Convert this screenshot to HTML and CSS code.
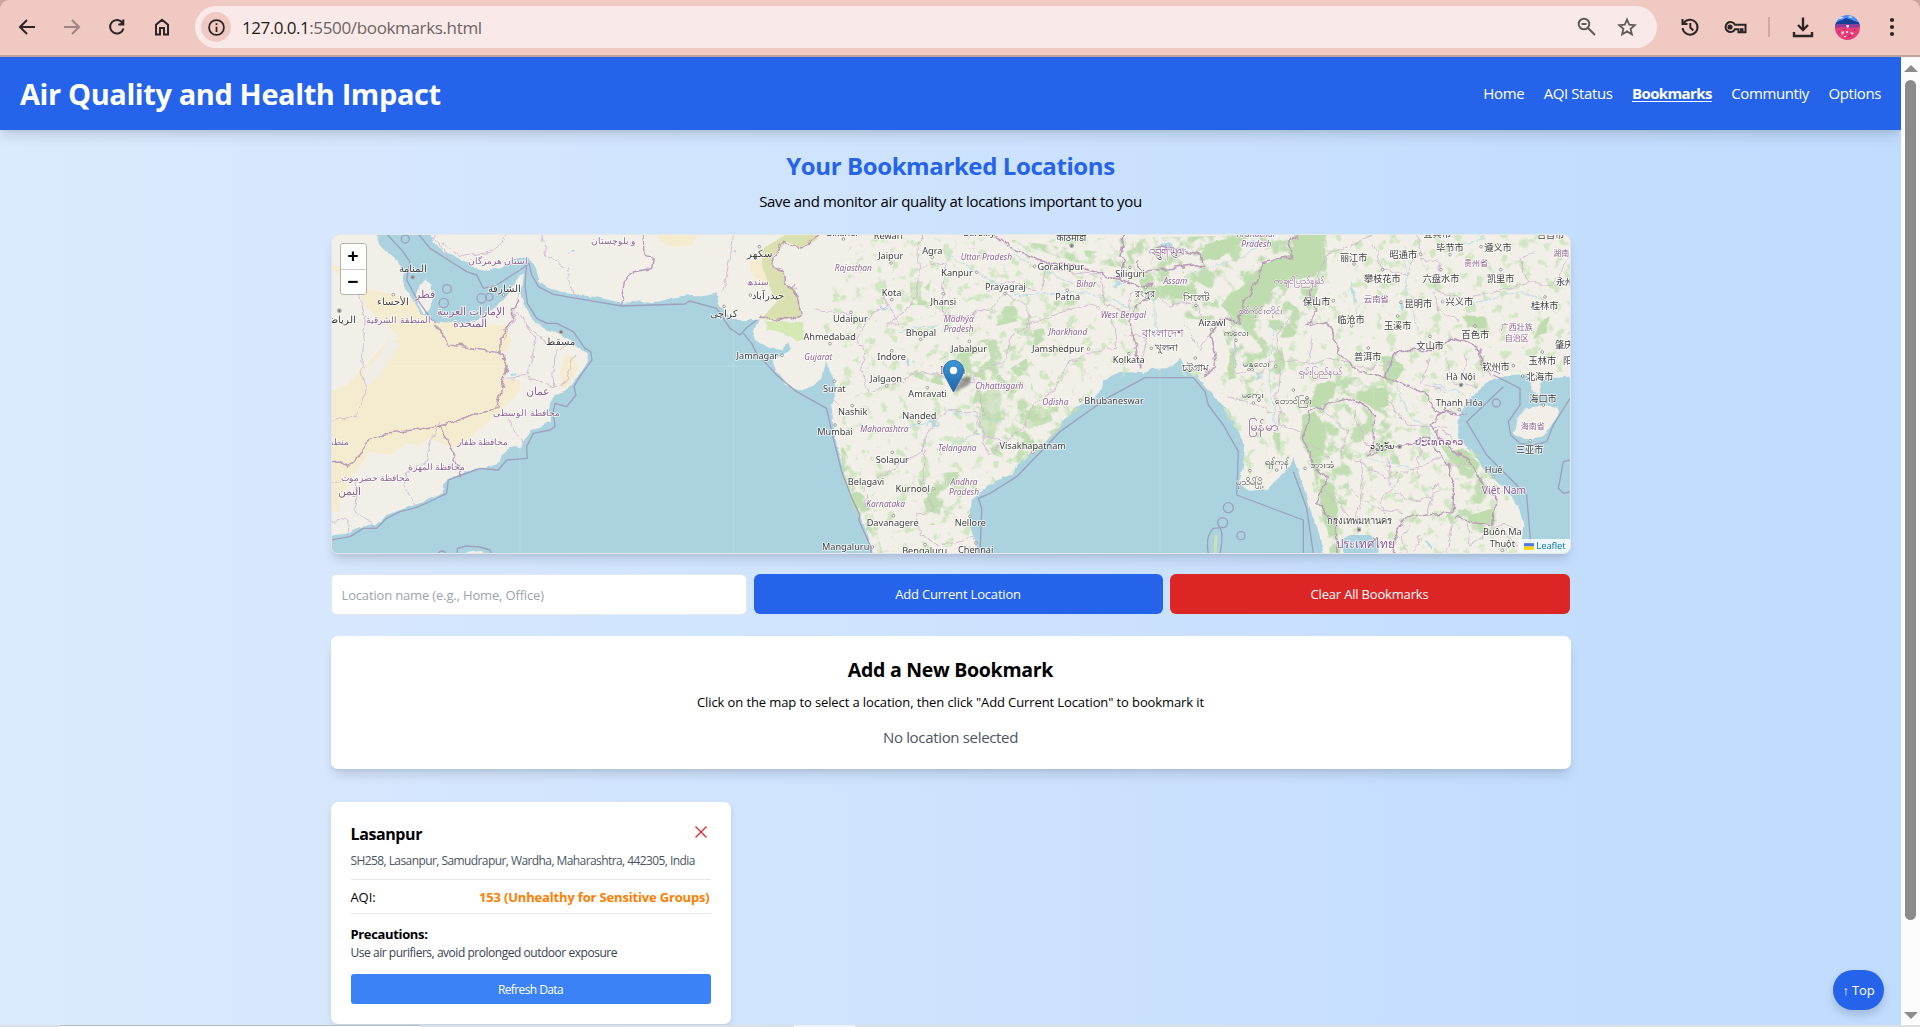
FILE: index.html
```html
<!DOCTYPE html>
<html lang="en">
<head>
<meta charset="utf-8">
<title>Air Quality and Health Impact</title>
<link rel="stylesheet" href="styles.css">
</head>
<body>
<div class="toolbar">
  <div class="nav-icons">
    <svg class="ico" viewBox="0 0 24 24"><path d="M20 12H5M12 5L5 12l7 7"/></svg>
    <svg class="ico faded" viewBox="0 0 24 24"><path d="M4 12h15M12 5l7 7-7 7"/></svg>
    <svg class="ico" viewBox="0 0 24 24"><path d="M17.600 8A6.800 6.800 0 1 0 18.500 13.500"/><path d="M19 4.500v5.500h-5.500z" fill="#2b2625" stroke="none"/><path d="M18.300 4.500V9.500h-5"/></svg>
    <svg class="ico" viewBox="0 0 24 24"><path d="M6 19.500V9.800L12 4.700l6 5.100v9.700h-4v-6.500h-4v6.500z"/></svg>
  </div>
  <div class="address">
    <span class="info"><svg viewBox="0 0 24 24"><circle cx="12" cy="12" r="8.500"/><path d="M12 11v6M12 7v2"/></svg></span>
    <span class="url"><span class="host">127.0.0.1</span>:5500/bookmarks.html</span>
    <svg class="ico grey zoom" viewBox="0 0 24 24"><circle cx="9" cy="9" r="5.300"/><path d="M13 13l7 7M6.500 9h5"/></svg>
    <svg class="ico grey star" viewBox="0 0 24 24"><path d="M12 4.500l2.200 5.200 5.600.5-4.200 3.700 1.300 5.500-4.900-3-4.900 3 1.300-5.500-4.200-3.700 5.600-.5z" stroke-width="1.800"/></svg>
  </div>
  <svg class="ico history" viewBox="0 0 24 24"><path d="M5.500 8.500A7.500 7.500 0 1 1 4.600 13M4.500 4V9h5M12.300 8v4.500l3 3"/></svg>
  <svg class="ico key" viewBox="0 0 26 24"><path d="M13 9.800A5 5 0 1 0 13 14.200h3.500v3h2.500v-3h1.500v3h3v-7.400z"/><circle cx="8" cy="12" r="2.600" fill="#2b2625" stroke="none"/></svg>
  <span class="sep"></span>
  <svg class="ico download" viewBox="0 0 24 24"><path d="M12 2.500v12M7 10L12 15l5-5M3 17v4h18v-4" stroke-width="2.400"/></svg>
  <svg class="avatar" viewBox="0 0 25 25">
    <clipPath id="av"><circle cx="12.500" cy="12.500" r="12.500"/></clipPath>
    <g clip-path="url(#av)"><path fill="#4a8df5" d="M0 0h25v8H0z"/><path fill="#cfe0ff" d="M3 2l5 0 1 1-5 1zM15 1l3 1-2 1-3-1z"/><path fill="#173f96" d="M0 8l4-2 3-1 4-2 6 2 8 3v3H0z"/><path fill="#8a3f9b" d="M0 9h25v4H0z"/><path fill="#ea3d78" d="M0 13l9-1 6 1 10-1v13H0z"/><path fill="#fbd3e4" d="M11 10h3v2l-2 1zM6 17l3-1v2l-2 2zM15 17l4 1-2 2zM11 16h2v2h-2zM9 21h2v1H9z"/><path fill="#7c2d7c" d="M3 16l2 1-1 1zM14 20l2 1-3 1zM19 14l2 1-2 1zM8 14h2v1z"/></g>
  </svg>
  <svg class="dots" viewBox="0 0 6 20"><circle cx="3" cy="3" r="2.100"/><circle cx="3" cy="10" r="2.100"/><circle cx="3" cy="17" r="2.100"/></svg>
</div>

<div class="viewport">
  <div class="page">
    <header class="header">
      <h1>Air Quality and Health Impact</h1>
      <nav>
        <a>Home</a><a>AQI Status</a><a class="active">Bookmarks</a><a>Communtiy</a><a>Options</a>
      </nav>
    </header>
    <main>
      <h2>Your Bookmarked Locations</h2>
      <p class="lead">Save and monitor air quality at locations important to you</p>

      <div class="map">
        <svg class="tiles" viewBox="33 27 3720 960" preserveAspectRatio="none">
          <defs>
            <filter id="veg" x="0" y="0" width="1" height="1" color-interpolation-filters="sRGB">
              <feTurbulence type="fractalNoise" baseFrequency="0.022" numOctaves="5" seed="7"/>
              <feColorMatrix values="0 0 0 0 .755  0 0 0 0 .865  0 0 0 0 .70  7 0 0 0 -3.4"/>
              <feComposite in2="SourceGraphic" operator="in"/>
            </filter>
            <filter id="specks" x="0" y="0" width="1" height="1" color-interpolation-filters="sRGB">
              <feTurbulence type="fractalNoise" baseFrequency="0.030" numOctaves="4" seed="21"/>
              <feColorMatrix values="0 0 0 0 .82  0 0 0 0 .90  0 0 0 0 .76  8 0 0 0 -4.6"/>
              <feComposite in2="SourceGraphic" operator="in"/>
            </filter>
            <filter id="rough" x="-5%" y="-5%" width="110%" height="110%">
              <feTurbulence type="fractalNoise" baseFrequency="0.030" numOctaves="3" seed="3"/>
              <feDisplacementMap in="SourceGraphic" scale="26" xChannelSelector="R" yChannelSelector="G"/>
            </filter>
            <filter id="coast" filterUnits="userSpaceOnUse" x="0" y="0" width="3790" height="1010">
              <feTurbulence type="fractalNoise" baseFrequency="0.035" numOctaves="2" seed="9"/>
              <feDisplacementMap in="SourceGraphic" scale="14" xChannelSelector="R" yChannelSelector="G"/>
            </filter>
          </defs>
          <rect x="0" y="0" width="3800" height="1010" fill="#aad3df"/>

          <g class="land" filter="url(#coast)">
            <path d="M0 0H165L175 50 190 70 215 90 235 110 250 140 245 160 262 200 285 235 300 265 325 270 345 295 400 290 430 298 470 288 500 265 530 245 560 210 580 180 600 150 612 150 608 180 600 200 610 235 625 265 650 295 690 320 720 325 750 345 775 370 803 385 803 410 785 440 760 470 735 500 705 510 690 530 688 560 690 590 660 608 635 615 615 645 600 665 565 670 545 690 540 710 510 722 470 730 430 745 390 758 370 780 368 805 340 818 290 838 240 855 200 870 170 900 120 905 80 925 0 938z"/>
            <path d="M300 178L318 163 335 180 337 215 330 245 315 267 300 252 290 215z"/>
            <path d="M318 0L340 50 365 80 400 90 440 112 490 137 540 130 580 105 625 95 645 130 655 170 680 187 740 205 820 215 870 225 905 235 940 228 1000 235 1060 217 1110 210 1160 212 1190 205 1195 235 1215 265 1240 285 1310 285 1325 282 1295 315 1305 345 1350 370 1390 375 1400 355 1412 370 1390 392 1355 402 1370 440 1400 480 1440 498 1480 482 1508 455 1518 405 1530 440 1540 460 1550 500 1535 540 1540 600 1550 660 1565 700 1575 760 1590 800 1615 860 1635 910 1655 960 1660 1000H1965L1970 960 1955 920 1952 870 1955 825 1990 795 2020 770 2080 748 2090 715 2140 680 2190 640 2230 590 2260 550 2320 522 2345 495 2350 465 2400 440 2470 445 2490 432 2540 430 2580 402 2595 435 2630 445 2650 480 2690 525 2730 560 2760 620 2775 670 2770 720 2758 775 2790 797 2840 792 2875 757 2910 728 2920 695 2930 730 2955 790 2970 850 2995 920 3015 1000H3600L3610 900 3595 840 3550 790 3500 740 3460 690 3415 640 3415 600 3420 560 3450 520 3480 490 3520 462 3570 450 3620 447 3640 500 3655 512 3668 462 3800 450V0z"/>
            <path d="M3590 580L3620 550 3670 540 3712 545 3715 570 3690 610 3660 640 3620 645 3582 625z"/>
            <path d="M420 1000L440 983 485 978 500 1000z"/>
          </g>

          <g class="sand">
            <path d="M33 120L60 125 130 190 250 215 285 235 300 268 340 290 390 360 540 378 566 420 530 545 545 560 480 610 450 640 400 670 330 640 300 660 260 655 210 690 150 680 100 750 60 830 60 860H33V500L80 480 130 430 200 350 240 340 190 290 130 240 120 200 33 130z"/>
            <path d="M390 292L440 298 560 300 575 345 560 380 540 380 392 360 345 295z"/>
            <path d="M735 395L760 392 775 430 745 480 725 495 720 440zM555 465L600 465 600 500 540 560 530 540z"/>
            <path d="M1010 27H1130L1120 60 1060 65 1020 50zM1290 110L1320 100 1360 160 1390 170 1330 180 1290 140z"/>
          </g>
          <path class="pale" d="M130 440L180 390 205 340 240 360 180 450 135 490z"/>
          <path fill="#dbe0b0" d="M1400 27H1495L1490 45 1440 70 1400 50 1355 100 1360 125 1390 140 1395 180 1425 190 1445 270 1430 280 1350 285 1325 280 1370 230 1355 200 1325 120 1330 70z"/>
          <path fill="#d5e9b5" filter="url(#coast)" d="M1335 288L1400 290 1450 290 1450 340 1430 350 1390 320 1340 318z"/>

          <path filter="url(#specks)" d="M1600 40H2440L2480 430 2340 480 2300 520 2080 740 1950 830 1950 980H1670L1560 660 1560 420 1500 280z"/>
          <g filter="url(#specks)"><path d="M2560 430H2900L2910 700 2800 780 2700 520zM3000 30H3780V440H3500L3430 560 3430 640 3590 850V990H3020L2960 700 2900 400z"/></g>
          <g class="veg" filter="url(#veg)">
            <path d="M2400 40L2800 30 3020 30V130L2950 300 2880 340 2900 440 2790 520 2750 450 2700 290 2600 280 2480 220zM2940 560L3000 440 3200 470 3220 620 3240 720 3100 680 3060 990H3030L2980 730zM3360 660L3480 690 3530 800 3520 930 3360 900 3440 780zM1970 490L2120 400 2150 550 2290 540 2110 720 2020 690 1950 560zM1560 650L1640 800 1690 990H1650L1570 760zM1760 450L1960 350 2170 310 2180 340 2000 470 1860 480zM1770 170L1840 120 1820 240 1770 240zM2040 40L2400 90 2420 130 2260 110zM1790 750L1920 740 1900 900 1830 900zM2000 250L2280 220 2260 250 2000 310z"/>
          </g>
          <g class="forest" filter="url(#coast)">
            <path d="M2650 60L2750 32 2800 30 2750 60 2700 100 2640 110zM2840 110L2920 90 2915 50 2930 27 3010 27 3020 120 2980 155 2900 165 2850 200 2820 270 2790 280 2760 290 2700 240 2740 200 2780 180 2810 140zM2515 180L2570 178 2630 190 2630 215 2570 220 2515 205zM2900 290L2930 320 2920 335 2880 340zM3185 395L3215 390 3250 430 3240 450 3210 485 3190 460zM3430 270L3495 275 3500 310 3440 305zM2990 480L3030 465 3045 480 3040 520 3000 550 2970 545zM3110 500L3200 485 3210 540 3170 555 3110 520zM2950 570L2980 560 3020 610 3010 690 2970 700 2940 640zM3390 680L3430 670 3480 720 3470 740 3420 710zM3000 760L3040 780 3055 850 3050 930 3030 940 3000 840zM3450 870L3520 850 3510 900 3440 890zM2860 620L2880 620 2880 680 2865 670zM2725 390L2745 390 2745 460 2725 465zM3660 290L3690 270 3680 320 3640 340z"/>
            <path opacity=".6" d="M1990 500L2040 490 2045 540 2020 640 1975 600zM2080 310L2130 305 2150 335 2090 330zM1770 175L1810 165 1800 230 1770 220zM2140 540L2190 560 2200 590 2120 610 2100 590z"/>
          </g>
          <path fill="#aad3df" d="M3062 945L3090 930 3150 930 3180 950 3170 1000H3075z"/>

          <g class="river" filter="url(#rough)">
            <path d="M2600 160L2660 130 2760 100 2830 50M2500 220L2505 330M2745 340L2740 440M2860 290L2850 480 2870 620M1870 80L1980 150 2100 210 2300 200 2440 250M2080 90L2260 180M1740 320L1860 300M1880 560L2050 590M1890 660L1980 620M3250 60L3260 200 3300 330M3340 480L3420 500M3200 400L3260 560 3350 640M3440 240L3600 200M3140 700L3280 730M3410 60L3500 40M1730 610L1860 590M3600 200L3680 230M3090 170L3110 270"/>
            <path stroke-width="8" d="M1760 400L1770 420M1680 240L1700 250M3095 190L3110 230M3240 230L3245 250M3310 950L3340 970M2400 170L2380 190M1830 590L1850 605M2810 440L2815 460M2520 60L2560 66M2780 60L2810 50M570 447L590 449M742 80L760 82M1245 80L1252 82"/>
          </g>

          <g class="admin" filter="url(#rough)">
            <path d="M385 100L360 60 340 27M365 55L420 95 520 80 560 27M665 27L680 90 740 130 765 215M1240 30L1225 140 1205 200M110 180L135 290 125 430 140 500 105 580 33 582M360 590L330 650 320 710 260 745 255 790 290 845M545 560L615 665M560 460L620 455 650 345 590 260M620 460L700 485 705 380 760 350M700 480L740 470 765 390M600 200L580 280 550 350M620 300L660 330 680 355M33 775L75 765 110 770 105 860 165 905M33 890L80 885 85 935"/>
            <path d="M1480 255L1560 260 1640 290 1660 260 1700 240 1690 210 1720 270 1740 300 1700 300 1780 240 1800 130 1880 110 1870 200 1860 260 1920 280 2010 250 2060 200 2120 240 2130 300 2110 330M1640 290L1610 340 1640 380 1620 430 1650 500 1720 480 1800 440 1960 470 1980 440 2060 400 2070 340 2120 300 2260 250 2320 240 2380 280 2390 370 2300 380 2240 420 2200 500 2140 540 2110 610 2000 690 1990 620 1970 560 1880 560 1820 620 1810 680 1770 700 1640 780 1630 800M1970 480L1990 570 1960 620 2050 650M1820 620L1810 780 1840 850 1790 870 1800 930 1850 960 1960 940M1640 810L1630 860M2000 200L2060 170 2160 200 2180 130 2340 150M2340 150L2360 240 2420 260 2440 200M1800 130L1790 60 1810 27M1540 530L1560 540M2420 330L2480 340 2460 430M2500 180L2540 240 2630 230 2650 300M2590 300L2640 370 2690 300 2720 270 2750 330 2740 430"/>
            <path d="M2970 300L2990 250 2960 200 2990 160 3020 90 3100 60 3160 30M3160 60L3190 130 3260 150 3300 80 3290 30M3300 100L3360 110 3350 200 3430 220 3500 210 3620 170 3600 100 3640 80M3340 200L3360 260 3420 290M3620 170L3700 180 3750 90M3240 380L3200 420 3140 430 3030 400 2960 420 2880 400 2870 330 2910 270M2880 430L2870 520 2880 600 2940 620M2980 330L2970 400M2720 510L2800 540 2890 570M2740 450L2820 440 2880 400M3100 700L3200 760 3360 700M3120 700L3130 800 3100 900M3200 700L3210 800 3300 830 3360 800M3240 760L3180 830 3200 880M3300 660L3290 760M3080 780L3160 850 3250 860M3350 770L3320 870M3290 880L3240 940 3260 985M3400 890L3380 980M3440 880L3450 960 3540 900 3600 910M3370 720L3460 720M3330 400L3300 480 3380 500M3380 400L3400 470 3480 490M3440 380L3430 450M3480 400L3510 460M3200 520L3260 600 3380 610M2990 540L3080 620 3060 700M3100 530L3120 620 3160 680M3010 800L3060 830 3090 900M2960 650L3030 700M3400 640L3360 620M3120 870L3110 930M3540 910L3590 960M3300 930L3280 980"/>
          </g>
          <g class="nation" filter="url(#rough)">
            <path d="M335 285L390 360 540 380 540 350 565 300 580 260 600 220M540 380L566 420 530 545 360 603 290 617 195 627 140 655 100 715 75 725 60 708 33 710M360 603L425 750"/>
            <path d="M972 27L975 95 1000 100 995 130 945 140 918 160 905 240M1500 27L1440 70 1390 50 1355 100 1360 125 1390 145 1395 180 1425 190 1445 270 1420 285 1320 280M2020 27L2090 80 2180 110 2290 130 2390 160 2420 110 2400 90 2410 27M2450 100L2460 140 2650 120 2640 90 2510 60M2390 160L2480 190 2500 170M2460 430L2440 350 2430 290 2450 240 2500 200M2760 300L2700 280 2670 330 2690 420 2650 450M2760 300L2770 230 2800 190 2830 110 2920 95 2910 50 2940 27M3210 400L3240 380 3340 370 3400 340 3480 370 3490 430 3540 450M3210 400L3200 460 3260 480 3300 500 3360 560 3440 570M3000 160L2970 200 2990 260 2960 300 3020 290 3050 350 3070 400 3120 440 3170 450 3200 460M2950 640L2970 560 3040 530 3100 520 3160 560 3160 650 3140 690 3250 660 3330 640 3370 700 3400 770 3400 860 3250 880 3220 960 3230 1000M2950 640L2980 720 3020 760 2990 830 3040 890 3050 1000M3330 600L3400 680 3440 700 3490 770 3530 830 3520 900 3400 880M3330 600L3380 550"/>
          </g>
          <g class="maritime">
            <path d="M200 27L245 75 270 110 260 165 290 220 335 285M295 27L330 70 385 105 440 140 470 150 490 190 530 180 600 135 627 115 635 150 655 185 700 208 770 220 905 243 1095 237 1108 228 1190 250 1230 310 1260 330 1278 310 1310 285M1270 325L1295 355 1310 385 1370 450 1430 500 1520 550 1535 620 1565 740 1600 830 1620 870 1616 885 1650 960 1655 990"/>
            <path d="M620 115L615 180 622 235 650 280 680 295 710 295 760 320 795 370 812 380 816 405 790 440 770 470 762 485 768 510 740 545 705 535 700 560 705 605 690 615 640 625 620 665 622 700 560 705 535 735 480 730 425 750 385 765 380 805 340 825 290 847 240 860 200 880 170 910 130 910 90 935 33 945"/>
            <path d="M1980 990L1985 850 1975 820 2010 805 2090 755 2220 620 2360 520 2475 458 2620 458 2655 500 2665 540 2710 600 2755 680 2750 810 2950 885V990M2920 740L2960 850 2980 985M3520 450L3600 490 3600 540 3565 590 3572 630 3600 655M3550 485L3440 590 3500 690 3620 810 3635 990M3750 520L3700 600 3680 650 3640 660 3600 655M3750 705L3730 710 3715 790 3730 805 3752 800"/>
            <path d="M2665 985Q2655 935 2680 910L2700 908Q2712 930 2700 985M412 985V970L440 963 480 966 510 975 515 985"/>
            <g><circle cx="381" cy="192" r="13"/><circle cx="371" cy="234" r="14"/><circle cx="485" cy="220" r="14"/><circle cx="508" cy="216" r="11"/><circle cx="256" cy="42" r="12"/><circle cx="2725" cy="848" r="15"/><circle cx="2708" cy="893" r="15"/><circle cx="2763" cy="932" r="12"/><circle cx="3529" cy="534" r="12"/><circle cx="366" cy="988" r="10"/></g>
          </g>
          <path fill="#cfe0b4" d="M2680 985L2684 930 2693 930 2690 985z"/>
          <path class="seams" d="M600 27V987M1240 27V987M1880 27V987M2520 27V987M3160 27V987M33 424H3753"/>

          <g class="towns">
            <g><circle cx="220" cy="209" r="4"/><circle cx="551" cy="210" r="4"/><circle cx="1212" cy="244" r="4"/>
            <circle cx="1318" cy="65" r="4"/><circle cx="1291" cy="210" r="4"/><circle cx="1570" cy="42" r="4"/><circle cx="1713" cy="114" r="4"/><circle cx="1837" cy="97" r="4"/><circle cx="1970" cy="142" r="4"/><circle cx="2143" cy="124" r="4"/><circle cx="2055" cy="206" r="4"/><circle cx="1715" cy="224" r="4"/><circle cx="1870" cy="206" r="4"/><circle cx="2242" cy="196" r="4"/><circle cx="2430" cy="127" r="4"/><circle cx="2477" cy="187" r="4"/><circle cx="1593" cy="262" r="4"/><circle cx="1802" cy="343" r="4"/><circle cx="1530" cy="356" r="4"/><circle cx="1948" cy="349" r="4"/><circle cx="1715" cy="377" r="4"/><circle cx="1386" cy="391" r="4"/><circle cx="2306" cy="372" r="4"/><circle cx="2427" cy="386" r="4"/><circle cx="1700" cy="482" r="4"/><circle cx="1543" cy="469" r="4"/><circle cx="1822" cy="488" r="4"/><circle cx="2282" cy="526" r="4"/><circle cx="1597" cy="542" r="4"/><circle cx="1797" cy="592" r="4"/><circle cx="1545" cy="600" r="4"/><circle cx="2138" cy="682" r="4"/><circle cx="1717" cy="682" r="4"/><circle cx="1840" cy="791" r="4"/><circle cx="1720" cy="872" r="4"/><circle cx="1950" cy="874" r="4"/><circle cx="1657" cy="966" r="4"/><circle cx="1815" cy="959" r="4"/><circle cx="1968" cy="954" r="4"/>
            <circle cx="2628" cy="241" r="4"/><circle cx="2675" cy="314" r="4"/><circle cx="2748" cy="346" r="4"/><circle cx="2494" cy="370" r="4"/><circle cx="2626" cy="399" r="4"/><circle cx="2867" cy="424" r="4"/><circle cx="2800" cy="534" r="4"/><circle cx="2920" cy="495" r="4"/><circle cx="2955" cy="730" r="4"/><circle cx="2870" cy="735" r="4"/><circle cx="2790" cy="737" r="4"/><circle cx="3102" cy="117" r="4"/><circle cx="3302" cy="88" r="4"/><circle cx="3390" cy="89" r="4"/><circle cx="3483" cy="65" r="4"/><circle cx="3188" cy="134" r="4"/><circle cx="3363" cy="134" r="4"/><circle cx="3542" cy="134" r="4"/><circle cx="3040" cy="227" r="4"/><circle cx="3243" cy="232" r="4"/><circle cx="3368" cy="230" r="4"/><circle cx="3675" cy="216" r="4"/><circle cx="3095" cy="303" r="4"/><circle cx="3233" cy="273" r="4"/><circle cx="3465" cy="303" r="4"/><circle cx="3330" cy="334" r="4"/><circle cx="3145" cy="369" r="4"/><circle cx="3667" cy="381" r="4"/><circle cx="3580" cy="422" r="4"/><circle cx="3608" cy="453" r="4"/><circle cx="3418" cy="554" r="4"/><circle cx="3670" cy="540" r="4"/><circle cx="3630" cy="647" r="4"/><circle cx="3520" cy="755" r="4"/><circle cx="3547" cy="976" r="4"/></g>
            <g class="capital"><circle cx="278" cy="157" r="5"/><circle cx="58" cy="257" r="5"/><circle cx="723" cy="321" r="5"/><circle cx="2255" cy="62" r="5"/><circle cx="3423" cy="480" r="5"/><circle cx="3239" cy="665" r="5"/><circle cx="3117" cy="914" r="5"/></g>
          </g>

          <g class="labels">
            <g class="city arabic">
              <text x="278" y="142">المنامة</text><text x="220" y="241">الأحساء</text><text x="62" y="295">الرياض</text><text x="552" y="202">الشارقة</text><text x="722" y="359">مسقط</text><text x="1212" y="276">کراچی</text><text x="1318" y="95">سکھر</text><text x="1343" y="222">حیدرآباد</text>
            </g>
            <g class="region">
              <text x="535" y="117" font-size="27">استان هرمزگان</text><text x="880" y="56" font-size="27">و بلوچستان</text><text x="315" y="219" font-size="32">قطر</text><text x="452" y="270" font-size="33">الإمارات العربية</text><text x="450" y="306" font-size="33">المتحدة</text><text x="236" y="295" font-size="27">المنطقة الشرقية</text><text x="653" y="509" font-size="33">عمان</text><text x="620" y="573" font-size="27">محافظة الوسطى</text><text x="487" y="659" font-size="27">محافظة ظفار</text><text x="350" y="735" font-size="27">محافظة المهرة</text><text x="166" y="767" font-size="27">محافظة حضرموت</text><text x="88" y="811" font-size="34">اليمن</text><text x="50" y="661" font-size="27">منطقة</text>
            </g>
            <g transform="translate(1230 0)">
              <g class="city">
                <text x="338" y="33">Bikaner</text><text x="475" y="41">Rewari</text><text x="747" y="33">Bareilly</text><text x="482" y="103">Jaipur</text><text x="607" y="86">Agra</text><text x="681" y="153">Kanpur</text><text x="992" y="134">Gorakhpur</text><text x="1200" y="156">Siliguri</text><text x="485" y="213">Kota</text><text x="640" y="240">Jhansi</text><text x="826" y="196">Prayagraj</text><text x="1013" y="225">Patna</text><text x="361" y="291">Udaipur</text><text x="573" y="332">Bhopal</text><text x="299" y="346">Ahmedabad</text><text x="717" y="382">Jabalpur</text><text x="485" y="406">Indore</text><text x="82" y="403">Jamnagar</text><text x="984" y="382">Jamshedpur</text><text x="1196" y="413">Kolkata</text><text x="468" y="471">Jalgaon</text><text x="313" y="500">Surat</text><text x="593" y="515">Amravati</text><text x="1152" y="537">Bhubaneswar</text><text x="368" y="571">Nashik</text><text x="568" y="582">Nanded</text><text x="315" y="630">Mumbai</text><text x="908" y="671">Visakhapatnam</text><text x="487" y="713">Solapur</text><text x="408" y="780">Belagavi</text><text x="548" y="801">Kurnool</text><text x="488" y="902">Davanagere</text><text x="721" y="902">Nellore</text><text x="347" y="976">Mangaluru</text><text x="584" y="988">Bengaluru</text><text x="737" y="983">Chennai</text><text x="1024" y="48">काठमाडौँ</text><text x="1245" y="215">রংপুর</text>
              </g>
              <g class="region state">
                <text x="370" y="139">Rajasthan</text><text x="769" y="105">Uttar Pradesh</text><text x="1069" y="185">Bihar</text><text x="686" y="291">Madhya</text><text x="686" y="320">Pradesh</text><text x="1180" y="278">West Bengal</text><text x="1014" y="329">Jharkhand</text><text x="265" y="405">Gujarat</text><text x="808" y="493">Chhattisgarh</text><text x="976" y="539">Odisha</text><text x="463" y="620">Maharashtra</text><text x="682" y="679">Telangana</text><text x="702" y="781">Andhra</text><text x="702" y="810">Pradesh</text><text x="467" y="846">Karnataka</text>
              </g>
              <g class="region"><text x="668" y="447" font-size="32">India</text><text x="83" y="179" font-size="27">سندھ</text></g>
            </g>
            <g transform="translate(2490 0)">
              <g class="city">
                <text x="137" y="227" font-size="30">সিলেট</text><text x="186" y="302">Aizawl</text><text x="48" y="377" font-size="30">খুলনা</text><text x="135" y="438" font-size="30">চট্টগ্রাম</text><text x="697" y="672" font-size="25">ວຽງຈັນ</text><text x="627" y="897" font-size="28">กรุงเทพมหานคร</text><text x="932" y="465">Hà Nội</text><text x="928" y="544">Thanh Hóa</text><text x="1031" y="744">Huế</text><text x="1057" y="931">Buôn Ma</text><text x="1057" y="966">Thuột</text>
                <text x="611" y="107">丽江市</text><text x="760" y="99">昭通市</text><text x="900" y="79">毕节市</text><text x="1044" y="77">遵义市</text><text x="862" y="35">宜宾市</text><text x="1202" y="39">吉首市</text><text x="697" y="170">攀枝花市</text><text x="873" y="170">六盘水市</text><text x="1052" y="170">凯里市</text><text x="1259" y="181">永州市</text><text x="500" y="240">保山市</text><text x="805" y="245">昆明市</text><text x="928" y="241">兴义市</text><text x="1184" y="252">桂林市</text><text x="603" y="294">临沧市</text><text x="743" y="311">玉溪市</text><text x="976" y="338">百色市</text><text x="840" y="371">文山市</text><text x="1256" y="369">肇庆市</text><text x="653" y="406">普洱市</text><text x="1177" y="417">玉林市</text><text x="1280" y="417">阳江市</text><text x="1038" y="436">钦州市</text><text x="1169" y="466">北海市</text><text x="1179" y="530">海口市</text><text x="1139" y="684">三亚市</text>
              </g>
              <g class="city burmese">
                <text x="258" y="333">ကလေး</text><text x="320" y="425">မန္တလေး</text><text x="310" y="519">မကွေး</text><text x="430" y="537">တောင်ကြီး</text><text x="380" y="721">ရန်ကုန်</text><text x="515" y="730">ဘားအံ</text><text x="298" y="779">ပုသိမ်မြို့</text>
              </g>
              <g class="region burmese">
                <text x="448" y="176">ကချင်ပြည်နယ်</text><text x="333" y="267">စစ်ကိုင်းတိုင်း</text><text x="510" y="449">ရှမ်းပြည်နယ်</text>
              </g>
              <g class="region">
                <text x="318" y="35" class="state">Arunachal</text><text x="319" y="65" class="state">Pradesh</text><text x="76" y="176" class="state">Assam</text><text x="52" y="92" font-size="30">འབྲུག་ཡུལ་</text><text x="40" y="335" font-size="33">বাংলাদেশ</text><text x="340" y="617" font-size="38" stroke-width="3" class="heavy">မြန်မာ</text><text x="645" y="968" font-size="35">ประเทศไทย</text><text x="866" y="661" font-size="30">ປະເທດລາວ</text><text x="1062" y="807" font-size="31">Việt Nam</text><text x="978" y="122" font-size="24">贵州省</text><text x="679" y="230" font-size="25">云南省</text><text x="1246" y="92" font-size="24">湖南省</text><text x="1100" y="315" font-size="24">广西壮族</text><text x="1100" y="347" font-size="24">自治区</text><text x="1148" y="613" font-size="24">海南省</text>
              </g>
            </g>
          </g>
        </svg>
        <div class="zoomctl"><span>+</span><span>−</span></div>
        <svg class="pin" viewBox="0 0 42 42">
          <defs><linearGradient id="pg" x2="0" y2="1"><stop stop-color="#3f97d3"/><stop offset="1" stop-color="#1f66ad"/></linearGradient><filter id="bl"><feGaussianBlur stdDeviation="1.200"/></filter></defs>
          <path d="M11 32L19 18Q27 14 28 19 28 24 22 27z" fill="#333" opacity=".45" filter="url(#bl)"/>
          <path d="M10.500.5C4.700.5.500 5 .5 10.300c0 3 1.400 5.500 2.500 7.700L10.500 32 18 18c1.100-2.200 2.500-4.700 2.500-7.700C20.500 5 16.300.5 10.500.5z" fill="url(#pg)" stroke="#2a6ca6"/>
          <circle cx="10.500" cy="10.500" r="3.700" fill="#fff"/>
        </svg>
        <div class="attrib"><svg viewBox="0 0 12 8"><path fill="#4c7be1" d="M0 0h12v4H0z"/><path fill="#ffd500" d="M0 4h12v4H0z"/></svg>Leaflet</div>
      </div>

      <div class="controls">
        <input type="text" placeholder="Location name (e.g., Home, Office)">
        <button class="add">Add Current Location</button>
        <button class="clear">Clear All Bookmarks</button>
      </div>

      <section class="panel">
        <h3>Add a New Bookmark</h3>
        <p class="hint">Click on the map to select a location, then click "Add Current Location" to bookmark it</p>
        <p class="none">No location selected</p>
      </section>

      <article class="bookmark">
        <div class="bm-head"><h4>Lasanpur</h4><svg viewBox="0 0 12 12"><path d="M.5.5l11 11M11.500.5l-11 11"/></svg></div>
        <p class="place">SH258, Lasanpur, Samudrapur, Wardha, Maharashtra, 442305, India</p>
        <div class="aqi"><span>AQI:</span><b>153 (Unhealthy for Sensitive Groups)</b></div>
        <p class="prec">Precautions:</p>
        <p class="advice">Use air purifiers, avoid prolonged outdoor exposure</p>
        <button>Refresh Data</button>
      </article>
    </main>
    <div class="totop">↑ Top</div>
  </div>
  <div class="scrollbar"><i class="up"></i><i class="thumb"></i><i class="down"></i></div>
</div>
<div class="edge"><i class="tab"></i><i class="chip"></i></div>
</body>
</html>
```
FILE: styles.css
```css
* { box-sizing: border-box; margin: 0; padding: 0; }
html, body { height: 1027px; overflow: hidden; }
body { display: flex; flex-direction: column; font-family: "Open Sans", "Noto Sans", sans-serif; color: #000; background: #c9a69e; }

/* browser toolbar */
.toolbar { height: 57px; flex: none; background: #efc9c2; border-bottom: 2px solid #c2a29c; border-radius: 9px 9px 0 0; display: flex; align-items: center; padding: 0 24px 1px 15px; }
.ico { width: 24px; height: 24px; fill: none; stroke: #2b2625; stroke-width: 2; flex: none; }
.faded { stroke: #9d8582; }
.nav-icons { display: flex; gap: 21px; width: 180px; }
.ico.grey { stroke: #5f5957; }
.address { width: 1462px; height: 42px; border-radius: 21px; background: #f9eae9; display: flex; align-items: center; padding-left: 6px; flex: none; }
.info { width: 30px; height: 30px; border-radius: 50%; background: #efc9c2; display: flex; align-items: center; justify-content: center; margin-right: 11px; }
.info svg { width: 21px; height: 21px; fill: none; stroke: #2b2625; stroke-width: 2; }
.url { font-size: 17px; letter-spacing: -.35px; color: #6b6462; flex: 1; }
.host { color: #1f1b1a; letter-spacing: -.5px; }
.zoom { margin-right: 16px; }
.star { margin-right: 18px; }
.history { margin-left: 21px; }
.key { width: 26px; margin-left: 20px; }
.sep { width: 2px; height: 20px; background: #d3a89f; margin-left: 20px; }
.download { margin-left: 21px; }
.avatar { width: 25px; height: 25px; margin-left: 20px; }
.dots { width: 6px; height: 20px; margin-left: 29px; fill: #2b2625; }

.viewport { height: 968px; display: flex; flex: none; }
.page { width: 1901px; overflow: hidden; position: relative; background: linear-gradient(to right, #dbeafe, #bfdbfe); }

.header { height: 73px; background: #2563eb; color: #fff; display: flex; align-items: center; justify-content: space-between; padding: 0 20px; box-shadow: 0 8px 12px -2px rgba(0,0,0,.12), 0 3px 5px -2px rgba(0,0,0,.08); }
h1 { font-size: 29px; letter-spacing: -.4px; line-height: 36px; }
nav { display: flex; gap: 19.5px; font-size: 15px; letter-spacing: -.4px; line-height: 24px; padding-bottom: 1px; }
.active { font-weight: 700; letter-spacing: -.62px; text-decoration: underline; text-underline-offset: 2px; }

main { width: 1240px; margin: 20px auto 0; }
h2 { text-align: center; font-size: 24px; letter-spacing: -.4px; line-height: 32px; color: #2563eb; margin-bottom: 7px; }
.lead { text-align: center; font-size: 15px; letter-spacing: -.35px; line-height: 24px; margin-bottom: 21px; }

.map { height: 320px; position: relative; border: 1px solid #e5e7eb; border-radius: 7px; overflow: hidden; background: #aad3df; box-shadow: 0 8px 12px -2px rgba(0,0,0,.12), 0 3px 5px -2px rgba(0,0,0,.08); }
.tiles { display: block; width: 1240px; height: 320px; margin: -1px; }
.land { fill: #f2efe9; stroke: none; }
.sand { fill: #f5ecd0; }
.pale { fill: #f0ede6; }
.forest { fill: #bfdcae; }
.river { fill: none; stroke: #b5dbe6; stroke-width: 2.5; }
.admin { fill: none; stroke: #cdb6cf; stroke-width: 3; opacity: .85; }
.nation { fill: none; stroke: #b99bb8; stroke-width: 4.5; }
.maritime { fill: none; stroke: #9a93b4; stroke-width: 4; opacity: .8; stroke-linejoin: round; }
.seams { fill: none; stroke: #fff; stroke-width: 2; opacity: .22; }
.towns { fill: #fff; stroke: #777; stroke-width: 2; }
.capital circle { fill: #666; stroke: #aaa; stroke-width: 4; }
.labels { font-family: "Noto Sans", "Noto Sans CJK SC", sans-serif; text-anchor: middle; paint-order: stroke; stroke: #fffc; stroke-width: 5; stroke-linejoin: round; }
.city { fill: #3d3d3d; font-size: 27.5px; }
.arabic { font-size: 31px; }
.burmese { font-size: 28px; stroke-width: 3px; }
.region { fill: #8a5f8e; }
.state { font-style: italic; font-size: 25px; }
.zoomctl { position: absolute; left: 8px; top: 8px; width: 27px; height: 52px; border: 1px solid #b3b3ad; border-radius: 3px; background: #fff; display: flex; flex-direction: column; font: bold 19px/26px "Liberation Mono", monospace; text-align: center; }
.zoomctl span { height: 25px; }
.zoomctl span + span { border-top: 1px solid #ccc; }
.pin { position: absolute; left: 611px; top: 125px; width: 42px; height: 42px; }
.attrib { position: absolute; right: 0; bottom: 0; height: 14px; padding: 0 4px 0 5px; background: rgba(255,255,255,.8); color: #0078a8; font-size: 9.5px; line-height: 14px; letter-spacing: -.1px; display: flex; align-items: center; gap: 2px; }
.attrib svg { width: 10px; height: 7px; }

.controls { display: flex; gap: 7px; margin-top: 20px; height: 41px; align-items: flex-start; }
input { width: 416px; height: 41px; border: 1px solid #e5e7eb; border-radius: 6px; padding: 1px 9px 0 10px; font: 13px "Open Sans", sans-serif; letter-spacing: -.16px; background: #fff; }
input::placeholder { color: #9ca3af; opacity: 1; }
button { border: 0; color: #fff; font: 13px "Open Sans", sans-serif; letter-spacing: -.18px; border-radius: 6px; }
.add { width: 409px; height: 40px; background: #2563eb; }
.clear { width: 400px; height: 40px; background: #dc2626; }

.panel { margin-top: 21px; height: 133px; background: #fff; border-radius: 7px; padding-top: 20px; text-align: center; box-shadow: 0 8px 12px -2px rgba(0,0,0,.12), 0 3px 5px -2px rgba(0,0,0,.08); }
h3 { font-size: 19.5px; letter-spacing: -.28px; line-height: 28px; margin-bottom: 8px; }
.hint { font-size: 13px; letter-spacing: -.11px; line-height: 20px; margin-bottom: 13px; }
.none { font-size: 15px; letter-spacing: -.33px; line-height: 24px; color: #4b5563; }

.bookmark { width: 400px; height: 222px; margin-top: 33px; background: #fff; border-radius: 7px; padding: 20px; box-shadow: 0 3px 6px rgba(0,0,0,.1); }
.bm-head { display: flex; justify-content: space-between; height: 24px; }
h4 { font-size: 16px; letter-spacing: -.4px; line-height: 24px; }
.bm-head svg { width: 12px; height: 12px; margin: 4px 4px 0 0; fill: none; stroke: #dc2626; stroke-width: 1.3; }
.place { font-size: 12px; letter-spacing: -.58px; line-height: 18px; color: #4b5563; margin: 6px 0 9px; white-space: nowrap; }
.aqi { height: 35px; border: solid #e5e7eb; border-width: 1px 0; display: flex; justify-content: space-between; align-items: center; font-size: 13px; letter-spacing: -.1px; }
.aqi b { color: #ff7e00; letter-spacing: -.17px; margin-right: 1px; }
.prec { font-size: 13px; font-weight: 700; letter-spacing: -.35px; line-height: 20px; margin-top: 10px; }
.advice { font-size: 12px; letter-spacing: -.47px; line-height: 18px; color: #374151; margin-bottom: 12px; }
.bookmark button { display: block; width: 360px; height: 30px; background: #3b82f6; border-radius: 3px; font-size: 12px; letter-spacing: -.6px; }

.totop { position: absolute; right: 17px; bottom: 15px; width: 51px; height: 40px; border-radius: 20px; background: #2563eb; color: #fff; font-size: 13px; letter-spacing: -.2px; line-height: 40px; text-align: center; box-shadow: 0 5px 8px rgba(0,0,0,.15); }

.scrollbar { width: 19px; background: #fcfcfc; display: flex; flex-direction: column; align-items: center; padding: 8px 0 6px; }
.up, .down { border: solid transparent; border-width: 0 7px; }
.up { border-bottom: 7px solid #8b8b8b; }
.thumb { width: 11px; height: 840px; border-radius: 6px; background: #8b8b8b; margin-top: 8px; }
.down { border-top: 7px solid #8b8b8b; margin-top: auto; }

.edge { height: 2px; flex: none; background: #dde0e3; display: flex; }
.tab { width: 360px; margin-left: 60px; background: #fff; border-top: 1px solid #bbb; }
.chip { width: 61px; margin-left: 374px; background: #f2f2f2; }
```
